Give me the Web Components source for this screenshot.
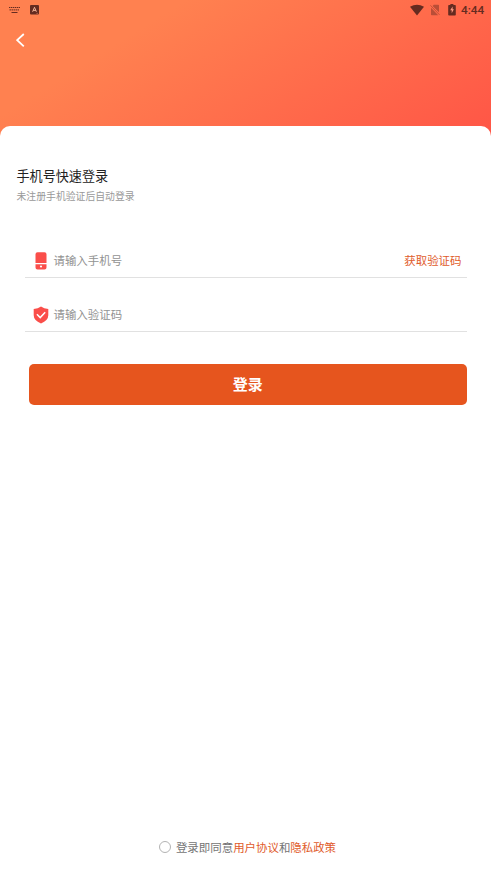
<!DOCTYPE html>
<html lang="zh-CN">
<head>
<meta charset="utf-8">
<title>手机号快速登录</title>
<style>
html,body{margin:0;height:100%;overflow:hidden}
body{font-family:Roboto,"Noto Sans CJK SC",sans-serif}
</style>
</head>
<body>
<login-page></login-page>
<script>
function define(name, html) {
  customElements.define(name, class extends HTMLElement {
    constructor() {
      super();
      this.attachShadow({mode: 'open'}).innerHTML = html;
    }
  });
}

define('status-bar', `
<style>
:host{display:flex;align-items:center;height:20px;padding:0 6px 0 9px;box-sizing:border-box;color:#652b20}
svg{display:block;flex:none}
.kb{margin-right:10px}.gap{flex:1}
.wifi{margin-right:6px}.sim{margin-right:8px}.bat{margin-right:5px}
span{font:500 11.8px/20px Roboto,sans-serif;width:24px;white-space:nowrap}
</style>
<svg class="kb" width="11" height="8" viewBox="0 0 11 8" fill="none" stroke="currentColor"><path d="M0 1.5h11" stroke-dasharray="1.4 .6"/><path d="M.5 3.9h10" stroke-dasharray="1.5 .5"/><path d="M2.5 6.5h6"/></svg>
<svg width="10" height="10" viewBox="0 0 10 10"><rect x="0" y="0" width="9" height="9.6" rx="1" fill="currentColor"/><path d="M2.6 6.8 4.5 2.3 6.4 6.8M3.2 5.4h2.6" fill="none" stroke="#ffc0a4" stroke-width=".9"/><path d="M6.4 8.4h1.6" stroke="#c87355" stroke-width=".7"/></svg>
<div class="gap"></div>
<svg class="wifi" width="14" height="12" viewBox="0 0 14 12" fill="currentColor"><path d="M0 2.8Q7-1.5 14 2.8L7 11.5Z"/></svg>
<svg class="sim" width="10" height="12" viewBox="0 0 10 12" opacity=".45"><path d="M3.8.8H8.200Q9 .8 9 1.600V8.200L2.600 2ZM1 3.800 8.200 11.200H1.800Q1 11.200 1 10.400Z" fill="currentColor"/><path d="M.4 1.300 9.600 10.900" stroke="currentColor" stroke-width=".8"/></svg>
<svg class="bat" width="8" height="12" viewBox="0 0 8 12"><path d="M2.4 1V0h3v1H7q.8 0 .8.8v8.900q0 .8-.8.8H1q-.8 0-.8-.8V1.800Q.2 1 1 1Z" fill="currentColor"/><path d="M4.6 2.5 2.2 6.2h1.5v3L5.9 5.3H4.6Z" fill="#ff9a83"/></svg>
<span>4:44</span>`);

define('back-button', `
<style>:host{display:block;padding:13px 0 0 16px}svg{display:block}</style>
<svg width="10" height="15" viewBox="0 0 10 15"><path d="M7.8 1 1.2 7.2 7.8 13.3" fill="none" stroke="#fff" stroke-width="1.8"/></svg>`);

define('form-field', `
<style>
:host{display:flex;align-items:center;height:33px;box-sizing:border-box;border-bottom:1px solid #e1e1e1;padding:0 5px 0 9px;font-size:11.45px;line-height:16px;color:#929292}
.icon{display:flex;width:14px;justify-content:center;margin-right:6px}
.label{flex:1}
::slotted([slot=action]){color:#df5b2b}
</style>
<div class="icon"><slot name="icon"></slot></div><div class="label"><slot></slot></div><slot name="action"></slot>`);

define('phone-icon', `
<style>:host,svg{display:block}</style>
<svg width="12" height="18" viewBox="0 0 12 18" fill="#fa4e4a"><path d="M2.5.3h7q2 0 2 2v8.700H.5v-8.700q0-2 2-2ZM.5 12.200h11v3.300q0 2-2 2h-7q-2 0-2-2Z"/><circle cx="6" cy="14.500" r="1.100" fill="#fff"/></svg>`);

define('shield-icon', `
<style>:host,svg{display:block}</style>
<svg width="16" height="18" viewBox="0 0 16 18"><path d="M8 .5Q11 2.8 15.3 3v6.200q0 5.100-7.300 8.200Q.7 14.300.7 9.200V3Q5 2.800 8 .5Z" fill="#fa4e4a"/><path d="M3.9 8.3 7.2 11.6 12.2 6.3" fill="none" stroke="#fff" stroke-width="1.5"/></svg>`);

define('submit-button', `
<style>:host{display:flex;align-items:center;justify-content:center;height:41px;border-radius:5px;background:#e6551e;color:#fff;font-size:15px;font-weight:700;line-height:22px}</style>
<slot></slot>`);

define('agreement-note', `
<style>
:host{display:flex;align-items:flex-start;justify-content:center;font-size:11.45px;line-height:16px;color:#747474;white-space:nowrap}
i{width:10px;height:10px;border:1px solid #b3b3b3;border-radius:50%;margin:2px 5px 0 0}
div{padding-top:1px}
::slotted(b){font-weight:400;color:#df5b2b}
</style>
<i></i><div><slot></slot></div>`);

define('login-page', `
<style>
:host{display:flex;flex-direction:column;height:100vh;background:linear-gradient(148deg,#ff8150 26%,#ff5546 100%) 0 0/100% 140px no-repeat}
header{height:126px;flex:none}
main{flex:1;display:flex;flex-direction:column;background:#fff;border-radius:10px 10px 0 0;padding:41px 24.5px 18px;box-sizing:border-box}
h1{margin:0 0 0 -8px;font-size:13.1px;line-height:20px;font-weight:400;color:#222}
p{margin:2px 0 0 -8px;font-size:9.85px;line-height:16px;color:#999}
.fields{display:grid;gap:21px;margin-top:40px}
submit-button{margin:32px 0 0 4.5px}
agreement-note{margin-top:auto;padding-left:4px}
</style>
<header><status-bar></status-bar><back-button></back-button></header>
<main>
<h1>手机号快速登录</h1>
<p>未注册手机验证后自动登录</p>
<div class="fields">
<form-field><phone-icon slot="icon"></phone-icon>请输入手机号<span slot="action">获取验证码</span></form-field>
<form-field><shield-icon slot="icon"></shield-icon>请输入验证码</form-field>
</div>
<submit-button>登录</submit-button>
<agreement-note>登录即同意<b>用户协议</b>和<b>隐私政策</b></agreement-note>
</main>`);
</script>
</body>
</html>
